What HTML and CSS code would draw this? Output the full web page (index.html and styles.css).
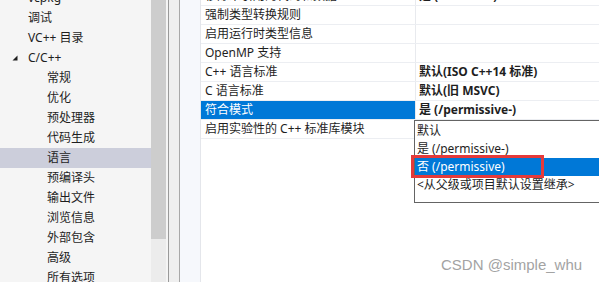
FILE: index.html
```html
<!DOCTYPE html>
<html>
<head>
    <meta charset="UTF-8">
    <title>C/C++ 语言属性</title>
    <link rel="stylesheet" href="styles.css">
</head>
<body>
    <div class="window">
        <!-- Configuration tree -->
        <div class="tree">
            <div class="node">vcpkg</div>
            <div class="node">调试</div>
            <div class="node">VC++ 目录</div>
            <div class="node open">
                <svg class="twisty" width="6" height="6" viewBox="0 0 6 6"><polygon points="5.5,0.5 5.5,5.5 0.5,5.5" fill="#1e1e1e"/></svg>
                C/C++
            </div>
            <div class="node child">常规</div>
            <div class="node child">优化</div>
            <div class="node child">预处理器</div>
            <div class="node child">代码生成</div>
            <div class="node child selected">语言</div>
            <div class="node child">预编译头</div>
            <div class="node child">输出文件</div>
            <div class="node child">浏览信息</div>
            <div class="node child">外部包含</div>
            <div class="node child">高级</div>
            <div class="node child">所有选项</div>
        </div>
        <div class="vscroll"><div class="thumb"></div></div>
        <div class="splitter"></div>
        <div class="gutter"></div>

        <!-- Property grid -->
        <div class="grid">
            <div class="prop"><span class="name">移除未引用的代码和数据</span><span class="value bold">是 (/Zc:inline)</span></div>
            <div class="prop"><span class="name">强制类型转换规则</span><span class="value"></span></div>
            <div class="prop"><span class="name">启用运行时类型信息</span><span class="value"></span></div>
            <div class="prop"><span class="name">OpenMP 支持</span><span class="value"></span></div>
            <div class="prop"><span class="name">C++ 语言标准</span><span class="value bold">默认(ISO C++14 标准)</span></div>
            <div class="prop"><span class="name">C 语言标准</span><span class="value bold">默认(旧 MSVC)</span></div>
            <div class="prop active"><span class="name">符合模式</span><span class="value bold">是 (/permissive-)</span></div>
            <div class="prop"><span class="name">启用实验性的 C++ 标准库模块</span><span class="value"></span></div>
        </div>

        <!-- Open combo box list -->
        <div class="dropdown">
            <div class="option">默认</div>
            <div class="option">是 (/permissive-)</div>
            <div class="option picked">否 (/permissive)</div>
            <div class="option">&lt;从父级或项目默认设置继承&gt;</div>
        </div>
        <div class="mark"></div>

        <div class="watermark">CSDN @simple_whu</div>
    </div>
</body>
</html>
```

FILE: styles.css
```css
body {
    margin: 0;
    font-family: "Noto Sans", "Noto Sans CJK SC", sans-serif;
    font-size: 12px;
    color: #1e1e1e;
}
.window {
    position: relative;
    display: flex;
    width: 599px;
    height: 282px;
    overflow: hidden;
    background: #f5f5f5;
}
.tree {
    width: 151px;
    flex-shrink: 0;
    margin-top: -12px;
}
.node {
    position: relative;
    height: 20px;
    line-height: 20px;
    padding-left: 28px;
    white-space: nowrap;
}
.node.child {
    padding-left: 47px;
}
.node.selected {
    background: #cccedb;
}
.twisty {
    position: absolute;
    left: 12px;
    top: 7px;
}
.vscroll {
    width: 15px;
    flex-shrink: 0;
    background: #ececec;
}
.thumb {
    height: 239px;
    background: #cdcdcd;
}
.splitter {
    width: 10px;
    flex-shrink: 0;
    margin-left: 2px;
    border-left: 1px solid #9a9a9a;
    border-right: 1px solid #a8a8a8;
    background: #efefef;
}
.gutter {
    width: 20px;
    flex-shrink: 0;
    background: #f6f8fc;
    border-right: 1px solid #e4e6eb;
}
.grid {
    flex: 1;
    margin-top: -13px;
    background: #fff;
}
.prop {
    display: flex;
    height: 18px;
    line-height: 18px;
    border-bottom: 1px solid #eceef2;
    white-space: nowrap;
}
.name {
    width: 210px;
    flex-shrink: 0;
    padding-left: 4px;
    border-right: 1px solid #e8eaee;
}
.value {
    flex: 1;
    padding-left: 3px;
}
.bold {
    font-weight: bold;
}
.prop.active .name {
    background: #0078d7;
    color: #fff;
}
.dropdown {
    position: absolute;
    left: 414px;
    top: 120px;
    width: 190px;
    height: 80px;
    padding-top: 1px;
    border: 1px solid #646464;
    background: #fff;
}
.option {
    height: 18px;
    line-height: 18px;
    padding-left: 2px;
    white-space: nowrap;
}
.option.picked {
    background: #0078d7;
    color: #fff;
}
.mark {
    position: absolute;
    left: 411px;
    top: 155px;
    width: 133px;
    height: 23px;
    box-sizing: border-box;
    border: 3px solid #e53a3a;
}
.watermark {
    position: absolute;
    left: 441px;
    top: 257px;
    font-family: "Liberation Sans", Arial, sans-serif;
    font-size: 15px;
    line-height: 15px;
    color: #a3a3a3;
}
```
